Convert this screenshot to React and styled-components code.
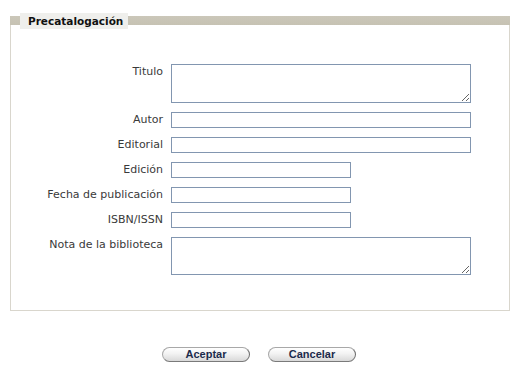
import React from "react";
import styled, { createGlobalStyle } from "styled-components";

const Global = createGlobalStyle`
  html, body { margin: 0; padding: 0; background: #ffffff; }
  body { font-family: "DejaVu Sans", Verdana, sans-serif; }
`;

const Page = styled.div`
  width: 523px;
  padding: 13px 0 0 10px;
  box-sizing: border-box;
`;

const Panel = styled.section`
  width: 500px;
`;

const Header = styled.div`
  display: flex;
  align-items: flex-start;
  height: 12px;
  background: linear-gradient(
    to bottom,
    transparent 3px,
    #cbc7b9 3px,
    #c6c2b3 12px,
    transparent 12px
  );
`;

const Tab = styled.div`
  margin-left: 10px;
  height: 16px;
  width: 108px;
  box-sizing: border-box;
  padding-left: 8px;
  background: #efefec;
  font-weight: bold;
  font-size: 10.5px;
  line-height: 16px;
  color: #111111;
`;

const Body = styled.div`
  border: 1px solid #d9d6cd;
  border-top: none;
  padding: 39px 0 35px 0;
`;

const Form = styled.div`
  display: grid;
  grid-template-columns: 152px auto;
  column-gap: 8px;
  row-gap: 9px;
  align-items: start;
`;

const Label = styled.label`
  text-align: right;
  font-size: 11px;
  line-height: 16px;
  color: #3a3a3a;
  white-space: nowrap;
`;

const Input = styled.input`
  display: block;
  width: ${(p) => (p.$narrow ? 180 : 300)}px;
  height: 16px;
  box-sizing: border-box;
  margin: 0;
  padding: 0 2px;
  border: 1px solid #8296b0;
  background: #fff;
  font-size: 11px;
  outline: none;
`;

const TextArea = styled.textarea`
  display: block;
  width: 300px;
  height: ${(p) => p.$h}px;
  box-sizing: border-box;
  margin: 0;
  padding: 2px;
  border: 1px solid #8296b0;
  background: #fff;
  font-size: 11px;
  outline: none;
`;

const Buttons = styled.div`
  width: 498px;
  display: flex;
  justify-content: center;
  gap: 18px;
  margin-top: 36px;
`;

const Button = styled.button`
  width: 88px;
  height: 15px;
  box-sizing: border-box;
  padding: 0;
  border: 1px solid #a8a8a8;
  border-right-color: #6e6e6e;
  border-bottom-color: #7a7a7a;
  border-radius: 8px;
  background: linear-gradient(to bottom, #ffffff 0%, #f2f2f2 45%, #d9d9d9 100%);
  font-family: "Liberation Sans", Arial, sans-serif;
  font-weight: bold;
  font-size: 11px;
  line-height: 13px;
  color: #1c2b4c;
  cursor: pointer;
`;

const fields = [
  { label: "Titulo", type: "area", h: 39 },
  { label: "Autor", type: "wide" },
  { label: "Editorial", type: "wide" },
  { label: "Edición", type: "narrow" },
  { label: "Fecha de publicación", type: "narrow" },
  { label: "ISBN/ISSN", type: "narrow" },
  { label: "Nota de la biblioteca", type: "area", h: 38 },
];

export default function App() {
  return (
    <>
      <Global />
      <Page>
        <Panel>
          <Header>
            <Tab>Precatalogación</Tab>
          </Header>
          <Body>
            <Form>
              {fields.map((f) => (
                <React.Fragment key={f.label}>
                  <Label>{f.label}</Label>
                  {f.type === "area" ? (
                    <TextArea $h={f.h} />
                  ) : (
                    <Input type="text" $narrow={f.type === "narrow"} />
                  )}
                </React.Fragment>
              ))}
            </Form>
          </Body>
        </Panel>
        <Buttons>
          <Button>Aceptar</Button>
          <Button>Cancelar</Button>
        </Buttons>
      </Page>
    </>
  );
}
